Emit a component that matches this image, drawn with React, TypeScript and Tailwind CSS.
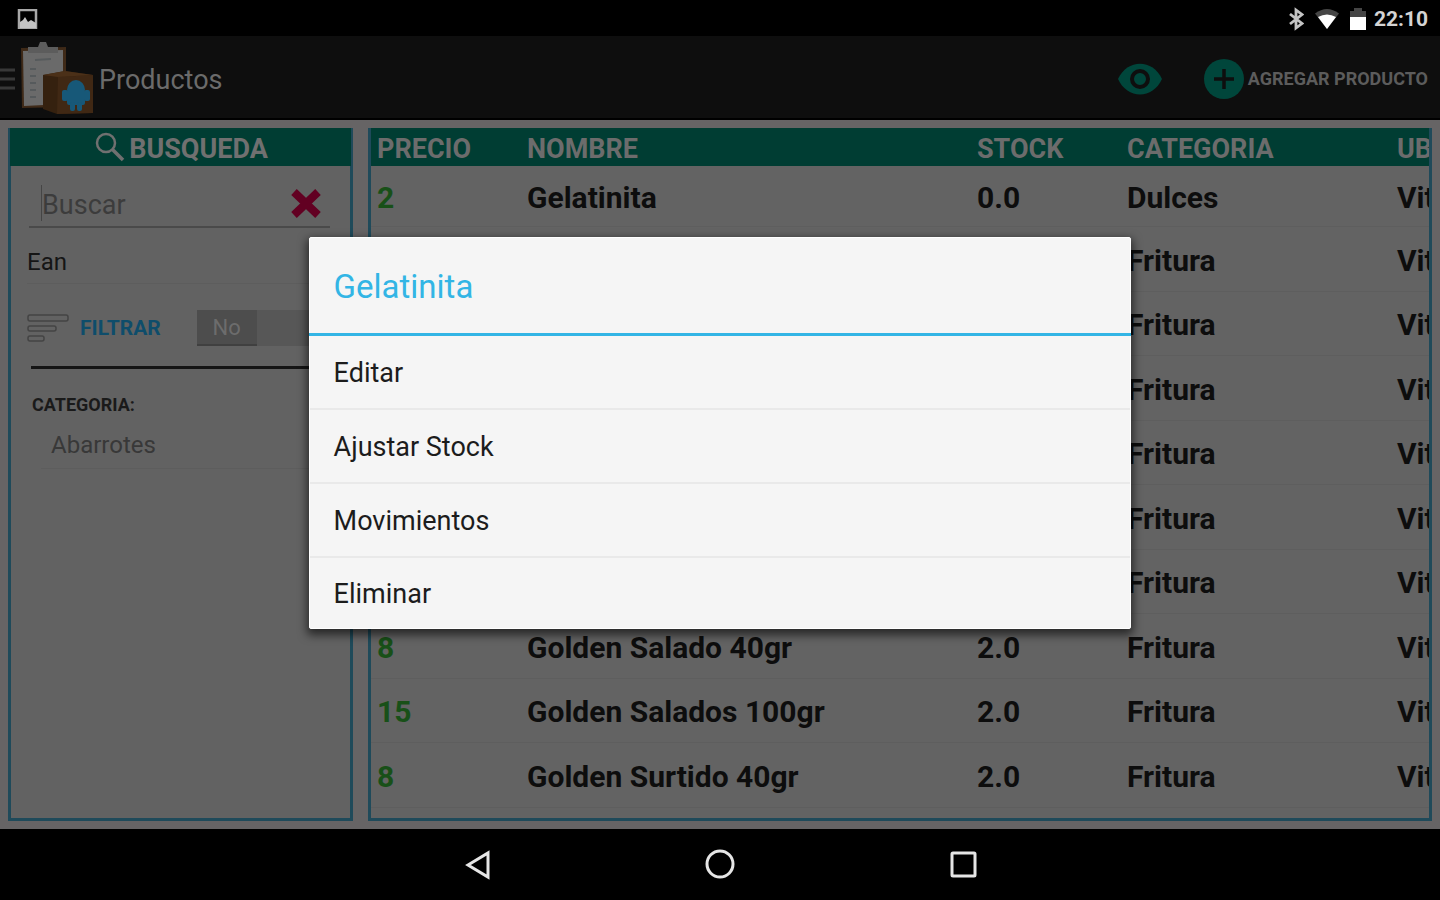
import { useState } from 'react';

const products = [
  { price: '2', name: 'Gelatinita', stock: '0.0', category: 'Dulces', place: 'Vitrina' },
  { price: '8', name: 'Golden Chips 40gr', stock: '2.0', category: 'Fritura', place: 'Vitrina' },
  { price: '15', name: 'Golden Chips 100gr', stock: '2.0', category: 'Fritura', place: 'Vitrina' },
  { price: '8', name: 'Golden Fuego 40gr', stock: '2.0', category: 'Fritura', place: 'Vitrina' },
  { price: '15', name: 'Golden Fuego 100gr', stock: '2.0', category: 'Fritura', place: 'Vitrina' },
  { price: '8', name: 'Golden Queso 40gr', stock: '2.0', category: 'Fritura', place: 'Vitrina' },
  { price: '15', name: 'Golden Queso 100gr', stock: '2.0', category: 'Fritura', place: 'Vitrina' },
  { price: '8', name: 'Golden Salado 40gr', stock: '2.0', category: 'Fritura', place: 'Vitrina' },
  { price: '15', name: 'Golden Salados 100gr', stock: '2.0', category: 'Fritura', place: 'Vitrina' },
  { price: '8', name: 'Golden Surtido 40gr', stock: '2.0', category: 'Fritura', place: 'Vitrina' },
];

const actions = ['Editar', 'Ajustar Stock', 'Movimientos', 'Eliminar'];

const StatusBar = () => (
  <div className="flex h-9 shrink-0 items-center justify-between bg-black pl-[17px] pr-3 pt-0.5">
    <svg width="21" height="20" viewBox="0 0 21 20">
      <path d="M2 1h17v18H2z" fill="none" stroke="#a8a8a8" strokeWidth="2.5" />
      <path d="M3 19v-6l3-2 2-3 3 5 3-2 5 3v5z" fill="#c4c4c4" />
    </svg>
    <div className="flex items-center">
      <svg width="16" height="24" viewBox="0 0 16 24" fill="none" stroke="#c4c4c4" strokeWidth="2.8">
        <path d="M2 7l12 9.500-6 4.500V3l6 4.500L2 17" />
      </svg>
      <svg className="ml-2.5" width="26" height="22" viewBox="0 0 26 22">
        <path d="M1 5.500Q13-3.500 25 5.500L13 21z" fill="#454545" />
        <path d="M4 9Q13 4 22 9L13 21z" fill="#fff" />
      </svg>
      <svg className="ml-2.5" width="16" height="24" viewBox="0 0 16 24">
        <path d="M0 4h4V1h8v3h4v8H0z" fill="#454545" />
        <path d="M0 10h16v13H0z" fill="#fff" />
      </svg>
      <span className="ml-2 text-[21px] font-bold leading-6 text-[#d4d4d4]">22:10</span>
    </div>
  </div>
);

const AppLogo = () => (
  <svg width="76" height="74" viewBox="0 0 76 74">
    <path d="M1 6l45-1v60l-44 1z" fill="#3f2a18" />
    <path d="M3 9l40-1v50l-19 5-20 1z" fill="#6a6a6a" />
    <path d="M8 5h10l2-5h6l2 5h10v6H8z" fill="#5c5c5c" />
    <path d="M15 18l16-1M10 27h6M10 34h6M10 41h6M10 48h6M10 55h6" stroke="#565a5c" strokeWidth="2" />
    <path d="M23 33l22-4 28 4v38l-36 1-14-5z" fill="#35210f" />
    <path d="M38 35l35-2v38l-36 1z" fill="#402814" />
    <path d="M23 33l22-4 28 4-35 2z" fill="#4b3018" />
    <g fill="#175878">
      <path d="M47 48a9 10 0 0 1 18 0z" />
      <rect x="47" y="47" width="18" height="16" rx="2" />
      <rect x="42" y="48" width="6" height="11" rx="2" />
      <rect x="64" y="48" width="6" height="11" rx="2" />
      <rect x="50" y="60" width="5" height="9" rx="2" />
      <rect x="57" y="60" width="5" height="9" rx="2" />
    </g>
  </svg>
);

const ActionBar = () => (
  <header className="flex h-[84px] shrink-0 items-center justify-between border-b-2 border-black bg-[#0e0e0e] pr-3 pt-1">
    <div className="flex items-center">
      <button aria-label="Menú">
        <svg width="16" height="26" viewBox="0 0 16 26" stroke="#383838" strokeWidth="3">
          <path d="M0 4h15M0 13h15M0 22h15" />
        </svg>
      </button>
      <div className="ml-1"><AppLogo /></div>
      <h1 className="ml-[3px] pt-0.5 text-[27px] leading-8 text-[#6b6b6b]">Productos</h1>
    </div>
    <div className="flex items-center">
      <button aria-label="Ver">
        <svg width="44" height="32" viewBox="0 0 44 32">
          <path d="M0 16C9-4.500 35-4.500 44 16C35 36.500 9 36.500 0 16z" fill="#00463b" />
          <circle cx="22" cy="16" r="8" fill="none" stroke="#0e0e0e" strokeWidth="4" />
        </svg>
      </button>
      <button className="ml-[42px] flex items-center gap-1 text-lg font-bold text-[#5c5c5c]">
        <svg width="40" height="40" viewBox="0 0 40 40">
          <circle cx="20" cy="20" r="20" fill="#00463b" />
          <path d="M20 10v20M10 20h20" stroke="#0e0e0e" strokeWidth="3.500" />
        </svg>
        AGREGAR PRODUCTO
      </button>
    </div>
  </header>
);

const SearchPanel = () => {
  const [search, setSearch] = useState('');

  return (
    <aside className="flex w-[345px] shrink-0 flex-col border-[3px] border-t-0 border-[#1f4a5a] bg-[#626262]">
      <div className="-mx-px flex h-[38px] shrink-0 items-center justify-center gap-1 bg-[#003d33] pl-0.5">
        <svg width="30" height="30" viewBox="0 0 30 30" fill="none" stroke="#707070" strokeWidth="2.500">
          <circle cx="11" cy="11" r="9" />
          <path d="M17.500 17.500L28 28" strokeWidth="3.500" />
        </svg>
        <h2 className="pt-1 text-[27px] font-bold leading-8 text-[#707070]">BUSQUEDA</h2>
      </div>
      <div className="ml-[18px] mr-5 mt-3.5 flex h-12 items-center border-b-2 border-[#4a4a4a] pl-3 pr-2">
        <div className="h-9 w-px bg-[#454545]" />
        <input
          type="text"
          aria-label="Buscar"
          placeholder="Buscar"
          value={search}
          onChange={(e) => setSearch(e.target.value)}
          className="min-w-0 flex-1 bg-transparent pt-1 text-[27px] leading-8 text-[#111] outline-none placeholder:text-[#3c3c3c]"
        />
        <button aria-label="Borrar" onClick={() => setSearch('')}>
          <svg width="32" height="30" viewBox="0 0 32 30">
            <path d="M4 4l24 23M28 4L4 27" stroke="#620022" strokeWidth="8" />
          </svg>
        </button>
      </div>
      <button className="mx-4 mt-2 h-12 border-b border-[#5d5d5d] pt-1 text-left text-2xl text-[#151515]">
        Ean
      </button>
      <div className="mt-[26px] flex h-9 items-center pl-4">
        <svg width="42" height="30" viewBox="0 0 42 30" fill="none" stroke="#444" strokeWidth="1.500">
          <rect x="1" y="2" width="40" height="6" rx="2" />
          <rect x="1" y="13" width="28" height="5" rx="2" />
          <rect x="1" y="23" width="16" height="5" rx="2" />
        </svg>
        <span className="ml-[11px] pt-0.5 text-[21px] font-bold text-[#0e4d6b]">FILTRAR</span>
        <button role="switch" aria-checked="false" aria-label="Filtrar" className="ml-9 flex h-9 w-[122px] bg-[#575757] text-[22px] text-[#6c6c6c]">
          <span className="h-full w-[60px] border-b-2 border-[#404040] bg-[#4d4d4d] leading-9">No</span>
        </button>
      </div>
      <div className="mx-5 mt-5 h-[3px] bg-[#151515]" />
      <h3 className="ml-[21px] mt-6 text-lg font-bold leading-6 text-[#1a1a1a]">CATEGORIA:</h3>
      <button className="ml-[30px] mr-5 mt-1 h-12 border-b border-[#5d5d5d] pl-2.5 text-left text-2xl text-[#383838]">
        Abarrotes
      </button>
    </aside>
  );
};

const ProductTable = () => (
  <section className="min-w-0 flex-1 overflow-hidden border-[3px] border-t-0 border-[#1f4a5a] bg-[#636363]">
    <table className="w-[1280px] table-fixed border-collapse text-left">
      <thead>
        <tr className="h-[38px] bg-[#003d33] text-[27px] leading-8 text-[#6c6c6c] *:pt-1">
          <th className="w-[156px] pl-1.5">PRECIO</th>
          <th className="w-[450px]">NOMBRE</th>
          <th className="w-[150px]">STOCK</th>
          <th className="w-[270px]">CATEGORIA</th>
          <th>UBICACION</th>
        </tr>
      </thead>
      <tbody className="text-[30px] font-bold leading-8 text-[#0d0d0d]">
        {products.map((p, i) => (
          <tr key={i} className="h-16 border-b border-[#5e5e5e] first:h-[60px] even:h-[65px] *:pt-1">
            <td className="pl-1.5 text-[#185018]">{p.price}</td>
            <td>{p.name}</td>
            <td>{p.stock}</td>
            <td>{p.category}</td>
            <td>{p.place}</td>
          </tr>
        ))}
      </tbody>
    </table>
  </section>
);

const ActionDialog = () => (
  <div
    role="dialog"
    aria-labelledby="dialog-title"
    className="w-4/7 rounded-xs border border-white bg-[#f5f5f5] shadow-[0_4px_10px_2px_rgba(0,0,0,0.6)]"
  >
    <h2 id="dialog-title" className="-mx-px flex h-[98px] items-center border-b-[3px] border-[#33b5e5] px-[25px] pt-1 text-[33px] text-[#33b5e5]">
      Gelatinita
    </h2>
    <ul className="divide-y-2 divide-[#e9e9e9]">
      {actions.map((a) => (
        <li key={a} className="h-[74px] last:h-[70px]">
          <button className="h-full w-full px-6 pt-1 text-left text-[27px] text-[#1c1c1c]">{a}</button>
        </li>
      ))}
    </ul>
  </div>
);

const NavBar = () => (
  <nav className="flex h-[71px] shrink-0 items-center justify-center gap-[212px] bg-black">
    <button aria-label="Atrás">
      <svg width="32" height="32" viewBox="0 0 32 32" fill="none" stroke="#e6e6e6" strokeWidth="3">
        <path d="M8 16L28 4v24z" />
      </svg>
    </button>
    <button aria-label="Inicio">
      <svg width="32" height="32" viewBox="0 0 32 32" fill="none" stroke="#e6e6e6" strokeWidth="3">
        <circle cx="16" cy="15" r="13" />
      </svg>
    </button>
    <button aria-label="Recientes">
      <svg width="32" height="32" viewBox="0 0 32 32" fill="none" stroke="#e6e6e6" strokeWidth="3">
        <rect x="4" y="4" width="23" height="23" rx="1" />
      </svg>
    </button>
  </nav>
);

const App = () => {
  return (
    <div className="relative flex h-screen flex-col overflow-hidden bg-black font-['Roboto',sans-serif]">
      <StatusBar />
      <ActionBar />
      <main className="flex min-h-0 flex-1 gap-[15px] bg-[#666465] px-2 py-2">
        <SearchPanel />
        <ProductTable />
      </main>
      <NavBar />
      <div className="absolute inset-x-0 bottom-[71px] top-9 flex items-center justify-center">
        <ActionDialog />
      </div>
    </div>
  );
};

export default App;
